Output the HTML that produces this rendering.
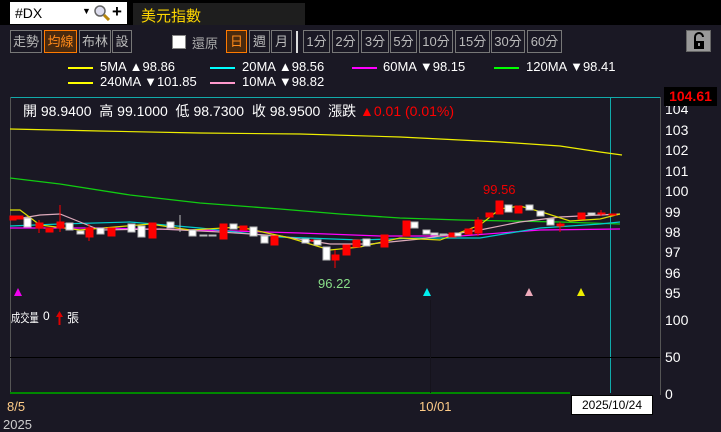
<!DOCTYPE html>
<html><head><meta charset="utf-8"><style>
*{margin:0;padding:0;box-sizing:border-box}
body{width:721px;height:426px;background:#1a1824;font-family:"Liberation Sans","Noto Sans CJK TC",sans-serif;position:relative;overflow:hidden;color:#fff}
.a{position:absolute;white-space:nowrap}
.btn{position:absolute;top:30px;height:23px;border:1px solid #777;color:#bbb;font-size:13px;line-height:21px;text-align:center}
.on{border-color:#ff7a00;background:#4a2a0e;color:#ff8a1a}
.ma{font-size:13px;color:#fff}
.ax{font-size:14px;color:#fff}
.ln{height:1.5px}
</style></head><body>
<div class="a" style="left:0;top:0;width:721px;height:25px;background:#000"></div>
<div class="a" style="left:10px;top:2px;width:117px;height:22px;background:#fff"></div>
<div class="a" style="left:15px;top:5px;font-size:14px;color:#000">#DX</div>
<div class="a" style="left:82px;top:6px;font-size:9px;color:#000">▼</div>
<svg class="a" style="left:94px;top:5px" width="16" height="16"><circle cx="6" cy="6" r="5" fill="#dde" stroke="#666" stroke-width="1.5"/><line x1="10" y1="10" x2="15" y2="15" stroke="#b8860b" stroke-width="3"/></svg>
<div class="a" style="left:112px;top:2px;font-size:17px;font-weight:bold;color:#000">+</div>
<div class="a" style="left:133px;top:3px;width:172px;height:22px;background:#1e1e1e"></div>
<div class="a" style="left:141px;top:5px;font-size:15px;color:#ffd800">美元指數</div>

<div class="btn" style="left:10px;width:32px">走勢</div>
<div class="btn on" style="left:44px;width:33px">均線</div>
<div class="btn" style="left:79px;width:32px">布林</div>
<div class="btn" style="left:112px;width:20px">設</div>
<div class="a" style="left:172px;top:35px;width:14px;height:14px;background:#fff;border:1px solid #888"></div>
<div class="a" style="left:192px;top:33px;font-size:13px;color:#aaa">還原</div>
<div class="btn on" style="left:226px;width:21px">日</div>
<div class="btn" style="left:249px;width:21px">週</div>
<div class="btn" style="left:271px;width:21px">月</div>
<div class="a" style="left:296px;top:31px;width:2px;height:22px;background:#ddd"></div>
<div class="btn" style="left:303px;width:27px">1分</div>
<div class="btn" style="left:332px;width:27px">2分</div>
<div class="btn" style="left:361px;width:28px">3分</div>
<div class="btn" style="left:390px;width:27px">5分</div>
<div class="btn" style="left:419px;width:34px">10分</div>
<div class="btn" style="left:455px;width:35px">15分</div>
<div class="btn" style="left:491px;width:34px">30分</div>
<div class="btn" style="left:527px;width:35px">60分</div>
<div class="a" style="left:686px;top:30px;width:25px;height:22px;background:#999;border:1px solid #666"></div>
<svg class="a" style="left:690px;top:32px" width="18" height="18"><path d="M5 9V5a4 4 0 0 1 8 0" fill="none" stroke="#000" stroke-width="2"/><rect x="4" y="9" width="10" height="8" fill="#000"/><rect x="8" y="11" width="2" height="3" fill="#999"/></svg>

<div class="a ln" style="left:68px;top:67px;width:25px;background:#ff0"></div>
<div class="a ma" style="left:100px;top:59px">5MA ▲98.86</div>
<div class="a ln" style="left:210px;top:67px;width:25px;background:#0ff"></div>
<div class="a ma" style="left:242px;top:59px">20MA ▲98.56</div>
<div class="a ln" style="left:352px;top:67px;width:25px;background:#f0f"></div>
<div class="a ma" style="left:383px;top:59px">60MA ▼98.15</div>
<div class="a ln" style="left:494px;top:67px;width:25px;background:#0f0"></div>
<div class="a ma" style="left:526px;top:59px">120MA ▼98.41</div>
<div class="a ln" style="left:68px;top:82px;width:25px;background:#ff0"></div>
<div class="a ma" style="left:100px;top:74px">240MA ▼101.85</div>
<div class="a ln" style="left:210px;top:82px;width:25px;background:#f9c"></div>
<div class="a ma" style="left:242px;top:74px">10MA ▼98.82</div>

<div class="a" style="left:11px;top:309px;font-size:12px;transform:scaleX(0.77);transform-origin:left top">成交量</div>
<div class="a" style="left:43px;top:309px;font-size:12px">0</div>
<div class="a" style="left:67px;top:309px;font-size:12px">張</div>

<svg class="a" style="left:0;top:0" width="721" height="426">
<line x1="10" y1="97.5" x2="660" y2="97.5" stroke="#1aa" stroke-width="1"/>
<line x1="10.5" y1="97" x2="10.5" y2="393" stroke="#555"/>
<line x1="660.5" y1="97" x2="660.5" y2="395" stroke="#555"/>
<line x1="610.5" y1="97" x2="610.5" y2="393" stroke="#1aa"/>
<line x1="10" y1="357.5" x2="660" y2="357.5" stroke="#000"/>
<line x1="10" y1="393" x2="570" y2="393" stroke="#080" stroke-width="2"/>
<line x1="430.5" y1="300" x2="430.5" y2="393" stroke="#15131c"/>
<polyline fill="none" stroke="#ee0" stroke-width="1.2" points="10,129 100,131 200,133 300,134 400,137 500,142 560,146 600,152 622,155"/>
<polyline fill="none" stroke="#1c1" stroke-width="1.3" points="10,178 60,184 130,195 200,203 280,209 340,214 400,218 460,220 560,222 620,224"/>
<polyline fill="none" stroke="#f0f" stroke-width="1.2" points="10,228 100,228 200,230 300,233 380,236 460,236 540,230 620,229"/>
<polyline fill="none" stroke="#0cc" stroke-width="1.2" points="10,226 60,224 130,222 200,228 280,237 360,240 420,238 480,238 540,228 600,224 620,222"/>
<polyline fill="none" stroke="#dab" stroke-width="1.2" points="10,220 40,215 60,214 80,222 100,230 160,229 220,232 280,236 330,244 370,244 420,239 480,230 520,222 560,217 600,215 620,214"/>
<polyline fill="none" stroke="#dd0" stroke-width="1.2" points="10,210 20,210 40,225 80,230 150,224 190,230 240,227 290,238 330,250 360,247 400,238 440,240 480,225 500,209 520,206 545,213 570,221 600,219 620,214"/>
<g stroke-width="1">
<g fill="#f00" stroke="#f00">
<rect x="10" y="216" width="6" height="4"/><rect x="16" y="216" width="7" height="3"/><rect x="36" y="223" width="7" height="5"/><line x1="39" y1="220" x2="39" y2="233"/><rect x="46" y="228" width="7" height="4"/><rect x="57" y="222" width="7" height="6"/><line x1="60" y1="205" x2="60" y2="232"/><rect x="86" y="228" width="7" height="9"/><line x1="89" y1="224" x2="89" y2="241"/><rect x="108" y="228" width="7" height="8"/><rect x="149" y="223" width="7" height="15"/><rect x="220" y="224" width="7" height="15"/><rect x="240" y="226" width="7" height="4"/><rect x="271" y="236" width="7" height="9"/><rect x="311" y="240" width="6" height="1"/><rect x="332" y="255" width="7" height="5"/><line x1="335" y1="250" x2="335" y2="268"/><rect x="343" y="245" width="7" height="10"/><rect x="353" y="240" width="7" height="7"/><rect x="381" y="235" width="7" height="12"/><rect x="403" y="221" width="7" height="15"/><rect x="449" y="233" width="7" height="4"/><rect x="465" y="229" width="7" height="5"/><rect x="475" y="220" width="7" height="13"/><line x1="478" y1="217" x2="478" y2="236"/><rect x="486" y="213" width="7" height="4"/><rect x="496" y="201" width="7" height="13"/><rect x="515" y="206" width="7" height="7"/><rect x="557" y="224" width="7" height="2"/><line x1="560" y1="222" x2="560" y2="232"/><rect x="578" y="213" width="7" height="6"/><line x1="601" y1="210" x2="601" y2="216"/><rect x="598" y="213" width="7" height="1"/><rect x="609" y="214" width="7" height="1"/>
</g>
<g fill="#fff" stroke="#bbb">
<rect x="24" y="218" width="7" height="9"/><rect x="66" y="223" width="7" height="7"/><rect x="77" y="231" width="7" height="3"/><rect x="97" y="228" width="7" height="6"/><rect x="128" y="224" width="7" height="8"/><rect x="138" y="226" width="7" height="11"/><rect x="167" y="222" width="7" height="6"/><line x1="180" y1="215" x2="180" y2="232"/><rect x="189" y="230" width="7" height="6"/><rect x="200" y="235" width="7" height="1"/><rect x="209" y="235" width="7" height="1"/><rect x="230" y="224" width="7" height="5"/><rect x="250" y="227" width="7" height="9"/><rect x="261" y="236" width="7" height="7"/><rect x="302" y="239" width="7" height="4"/><rect x="314" y="240" width="7" height="5"/><rect x="323" y="247" width="7" height="13"/><rect x="363" y="239" width="7" height="7"/><rect x="411" y="222" width="7" height="6"/><rect x="423" y="230" width="7" height="4"/><rect x="431" y="233" width="7" height="2"/><rect x="440" y="234" width="7" height="1"/><rect x="455" y="233" width="6" height="3"/><rect x="505" y="205" width="7" height="7"/><rect x="526" y="205" width="7" height="5"/><rect x="537" y="211" width="7" height="5"/><rect x="547" y="219" width="7" height="6"/><rect x="588" y="213" width="7" height="2"/>
</g></g>
<polygon points="14,296 22,296 18,288" fill="#e0e"/>
<polygon points="423,296 431,296 427,288" fill="#0ee"/>
<polygon points="525,296 533,296 529,288" fill="#eab"/>
<polygon points="577,296 585,296 581,288" fill="#ee0"/>
<line x1="59.5" y1="313" x2="59.5" y2="325" stroke="#d00" stroke-width="2"/><polygon points="56,317 63,317 59.5,311" fill="#d00"/>
</svg>
<div class="a" style="left:23px;top:101px;font-size:14px">開 98.9400 &nbsp;高 99.1000 &nbsp;低 98.7300 &nbsp;收 98.9500 &nbsp;漲跌 <span style="color:#f00">▲0.01 (0.01%)</span></div>
<div class="a" style="left:483px;top:182px;font-size:13px;color:#e00">99.56</div>
<div class="a" style="left:318px;top:276px;font-size:13px;color:#8d8">96.22</div>
<div class="a ax" style="left:665px;top:101px">104</div>
<div class="a ax" style="left:665px;top:122px">103</div>
<div class="a ax" style="left:665px;top:142px">102</div>
<div class="a ax" style="left:665px;top:163px">101</div>
<div class="a ax" style="left:665px;top:183px">100</div>
<div class="a ax" style="left:665px;top:204px">99</div>
<div class="a ax" style="left:665px;top:224px">98</div>
<div class="a ax" style="left:665px;top:244px">97</div>
<div class="a ax" style="left:665px;top:265px">96</div>
<div class="a ax" style="left:665px;top:285px">95</div>
<div class="a" style="left:664px;top:87px;width:53px;height:19px;background:#000;color:#f00;font-weight:bold;font-size:14px;line-height:19px;text-align:center">104.61</div>
<div class="a ax" style="left:665px;top:312px">100</div>
<div class="a ax" style="left:665px;top:349px">50</div>
<div class="a ax" style="left:665px;top:386px">0</div>
<div class="a" style="left:7px;top:399px;font-size:13px;color:#fc8">8/5</div>
<div class="a" style="left:419px;top:399px;font-size:13px;color:#fc8">10/01</div>
<div class="a" style="left:3px;top:417px;font-size:13px;color:#ccc">2025</div>
<div class="a" style="left:571px;top:395px;width:82px;height:20px;background:#fff;border:1px solid #000;color:#000;font-size:12px;line-height:18px;text-align:center">2025/10/24</div>
</body></html>
